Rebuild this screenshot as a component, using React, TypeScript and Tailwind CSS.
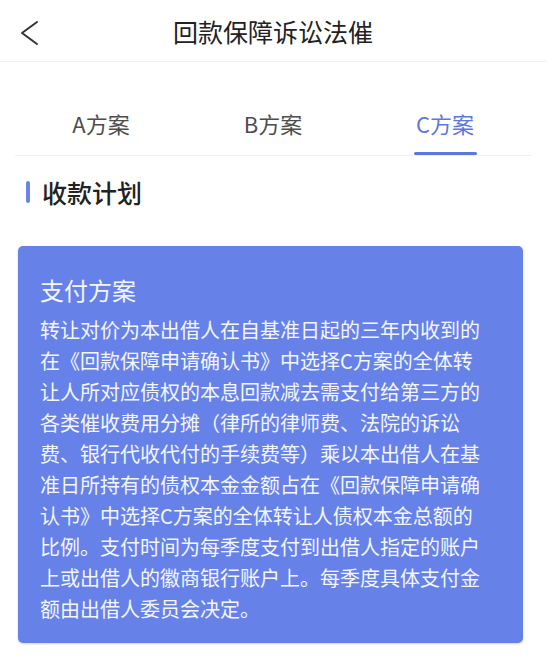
const body =
  '转让对价为本出借人在自基准日起的三年内收到的在《回款保障申请确认书》中选择C方案的全体转让人所对应债权的本息回款减去需支付给第三方的各类催收费用分摊（律所的律师费、法院的诉讼费、银行代收代付的手续费等）乘以本出借人在基准日所持有的债权本金金额占在《回款保障申请确认书》中选择C方案的全体转让人债权本金总额的比例。支付时间为每季度支付到出借人指定的账户上或出借人的徽商银行账户上。每季度具体支付金额由出借人委员会决定。'

const tabs = ['A方案', 'B方案', 'C方案']

export default function App() {
  const active = 2

  return (
    <div
      className="w-[546px] h-[660px] bg-white overflow-hidden"
      style={{ fontFamily: '"Noto Sans CJK SC", "Liberation Sans", sans-serif' }}
    >
      {/* Nav bar */}
      <div className="relative h-[62px] flex items-center justify-center border-b border-[#f1f1f1]">
        <svg
          className="absolute left-[18px] top-[19px]"
          width="24"
          height="28"
          viewBox="0 0 24 28"
          fill="none"
        >
          <polyline
            points="19,3 4,14 19,25"
            stroke="#333333"
            strokeWidth="2"
            strokeLinecap="round"
            strokeLinejoin="round"
          />
        </svg>
        <span className="text-[25px] leading-[32px] text-[#222222]">回款保障诉讼法催</span>
      </div>

      {/* Tabs */}
      <div className="mx-[15px] grid grid-cols-3 border-b border-[#efefef] pt-[46px]">
        {tabs.map((t, i) => (
          <div key={t} className="flex flex-col items-center">
            <span
              className={
                i === active
                  ? 'text-[22px] leading-[30px] text-[#5d77dc]'
                  : 'text-[22px] leading-[30px] text-[#4d4d4d]'
              }
            >
              {t}
            </span>
            <div
              className={
                i === active
                  ? 'mt-[14px] h-[3px] w-[63px] rounded-full bg-[#5d77dc]'
                  : 'mt-[14px] h-[3px] w-[63px]'
              }
            />
          </div>
        ))}
      </div>

      {/* Section heading */}
      <div className="mt-[19px] flex items-center gap-[12px] pl-[26px]">
        <div className="h-[22px] w-[4px] rounded-full bg-[#6a83e6]" />
        <span className="text-[25px] leading-[34px] font-medium text-[#222222]">收款计划</span>
      </div>

      {/* Card */}
      <div className="ml-[18px] mt-[37px] w-[505px] rounded-[5px] bg-[#6682e8] pl-[22px] pt-[28px] pb-[19px] shadow-[0_1px_2px_rgba(60,80,160,0.25)]">
        <div className="text-[24px] leading-[32px] text-[#f4f6ff]">支付方案</div>
        <p className="mt-[8px] w-[446px] text-[20px] leading-[31px] text-[#f4f6ff]">{body}</p>
      </div>
    </div>
  )
}
